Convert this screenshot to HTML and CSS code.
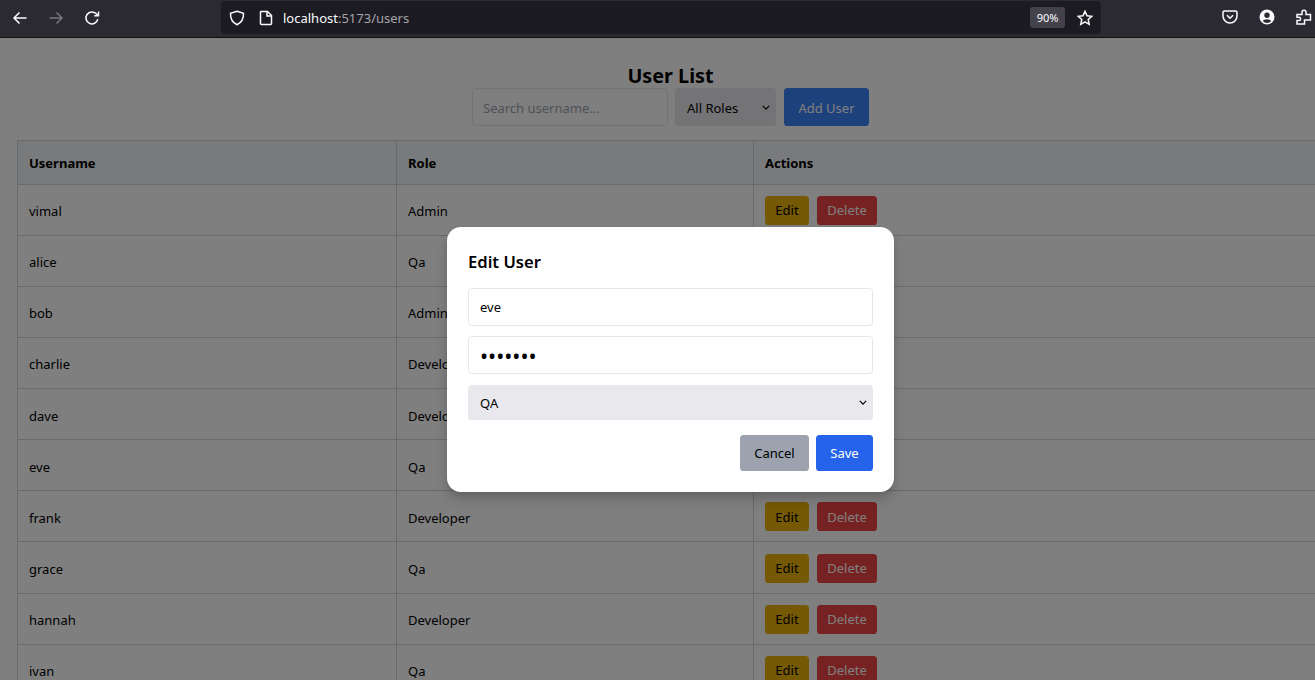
FILE: index.html
```html
<!DOCTYPE html>
<html lang="en">
<head>
    <meta charset="UTF-8">
    <meta name="viewport" content="width=device-width, initial-scale=1.0">
    <title>User List</title>
    <link rel="stylesheet" href="styles.css">
</head>
<body>

    <header class="toolbar">
        <div class="nav-btns">
            <svg class="icon" viewBox="0 0 16 16"><path d="M14.5 8H2M7.5 2.5 2 8l5.5 5.5"/></svg>
            <svg class="icon icon-dim" viewBox="0 0 16 16"><path d="M1.5 8H14M8.500 2.500 14 8l-5.500 5.500"/></svg>
            <svg class="icon" viewBox="0 0 16 16"><path d="M13.800 9.200A6 6 0 1 1 12.300 3.800L14 5.500M14.500 1.500v4.300h-4.300"/></svg>
        </div>
        <div class="urlbar">
            <svg class="icon" viewBox="0 0 16 16"><path d="M8 1.300 14.500 3.200c.2 5.500-1.800 9.300-6.500 11.500C3.300 12.500 1.300 8.700 1.500 3.200z"/></svg>
            <svg class="icon icon-page" viewBox="0 0 16 16"><path d="M3 1.500h6.500L13.500 5.500v8a1 1 0 0 1-1 1h-9a1 1 0 0 1-1-1v-11a1 1 0 0 1 .5-1z"/><path d="M9 1.500v4.500h4.500"/></svg>
            <span class="url"><span class="url-host">localhost</span>:5173/users</span>
            <span class="zoom-badge">90%</span>
            <svg class="icon icon-star" viewBox="0 0 16 16"><path d="m8 1.300 2 4.500 4.800.5-3.600 3.200 1 4.800L8 11.900l-4.200 2.400 1-4.800L1.200 6.300 6 5.800z"/></svg>
        </div>
        <div class="tool-btns">
            <svg class="icon" viewBox="0 0 16 16"><path d="M2.500 2h11A1.500 1.500 0 0 1 15 3.500V7a7 7 0 0 1-14 0V3.500A1.500 1.500 0 0 1 2.500 2z"/><path d="M5 6.300 8 9.200l3-2.900"/></svg>
            <svg class="icon icon-fill" viewBox="0 0 16 16"><path fill-rule="evenodd" d="M8 .5a7.500 7.500 0 1 1 0 15 7.500 7.500 0 0 1 0-15zM8 3.500a2.700 2.700 0 1 0 0 5.400 2.700 2.700 0 0 0 0-5.400zM8 10.300c-2 0-3.500.7-4.200 1.800A5.400 5.400 0 0 0 8 14a5.400 5.400 0 0 0 4.200-1.900c-.7-1.100-2.200-1.800-4.200-1.800z"/></svg>
            <svg class="icon" viewBox="0 0 16 16"><path d="M1 15v-3.500h2a1.600 1.600 0 0 0 0-3.200H1V5.500h5V3.200a2 2 0 0 1 4 0v2.300h4.500V11H8.500v4z"/></svg>
        </div>
    </header>

    <main class="page">
        <h1 class="title">User List</h1>
        <div class="controls">
            <input class="search" type="text" placeholder="Search username...">
            <div class="select-wrap role-filter">
                <select class="select"><option>All Roles</option></select>
                <svg class="chevron" viewBox="0 0 10 6"><path d="M1 1l4 4 4-4"/></svg>
            </div>
            <button class="btn btn-add">Add User</button>
        </div>

        <table class="users">
            <colgroup>
                <col class="col-name">
                <col class="col-role">
                <col>
            </colgroup>
            <thead>
                <tr><th>Username</th><th>Role</th><th>Actions</th></tr>
            </thead>
            <tbody>
                <tr><td>vimal</td><td>Admin</td><td><button class="btn-sm btn-edit">Edit</button><button class="btn-sm btn-delete">Delete</button></td></tr>
                <tr><td>alice</td><td>Qa</td><td><button class="btn-sm btn-edit">Edit</button><button class="btn-sm btn-delete">Delete</button></td></tr>
                <tr><td>bob</td><td>Admin</td><td><button class="btn-sm btn-edit">Edit</button><button class="btn-sm btn-delete">Delete</button></td></tr>
                <tr><td>charlie</td><td>Developer</td><td><button class="btn-sm btn-edit">Edit</button><button class="btn-sm btn-delete">Delete</button></td></tr>
                <tr><td>dave</td><td>Developer</td><td><button class="btn-sm btn-edit">Edit</button><button class="btn-sm btn-delete">Delete</button></td></tr>
                <tr><td>eve</td><td>Qa</td><td><button class="btn-sm btn-edit">Edit</button><button class="btn-sm btn-delete">Delete</button></td></tr>
                <tr><td>frank</td><td>Developer</td><td><button class="btn-sm btn-edit">Edit</button><button class="btn-sm btn-delete">Delete</button></td></tr>
                <tr><td>grace</td><td>Qa</td><td><button class="btn-sm btn-edit">Edit</button><button class="btn-sm btn-delete">Delete</button></td></tr>
                <tr><td>hannah</td><td>Developer</td><td><button class="btn-sm btn-edit">Edit</button><button class="btn-sm btn-delete">Delete</button></td></tr>
                <tr><td>ivan</td><td>Qa</td><td><button class="btn-sm btn-edit">Edit</button><button class="btn-sm btn-delete">Delete</button></td></tr>
            </tbody>
        </table>

        <div class="overlay">
            <div class="modal">
                <h2 class="modal-title">Edit User</h2>
                <input class="field" type="text" value="eve">
                <input class="field field-pass" type="password" value="1234567">
                <div class="select-wrap">
                    <select class="select"><option>QA</option></select>
                    <svg class="chevron" viewBox="0 0 10 6"><path d="M1 1l4 4 4-4"/></svg>
                </div>
                <div class="modal-actions">
                    <button class="btn btn-cancel">Cancel</button>
                    <button class="btn btn-save">Save</button>
                </div>
            </div>
        </div>
    </main>

</body>
</html>
```

FILE: styles.css
```css
* { box-sizing: border-box; }
html, body { margin: 0; height: 680px; overflow: hidden; }
body { font-family: "Noto Sans", Arial, sans-serif; background: #fff; color: #000; width: 1315px; }

/* browser bar */
.toolbar { height: 38px; background: #2b2a33; border-bottom: 1px solid #111; display: flex; align-items: flex-start; color: #fbfbfe; }
.icon { width: 16px; height: 16px; fill: none; stroke: #fbfbfe; stroke-width: 1.5; flex: none; }
.icon-dim { stroke: #77767c; }
.icon-fill { fill: #fbfbfe; stroke: none; }
.nav-btns { display: flex; gap: 20px; padding: 10px 0 0 12px; width: 221px; }
.urlbar { width: 880px; height: 33px; margin-top: 1px; background: #1c1b22; border-radius: 4px; display: flex; align-items: center; padding: 0 8px; }
.icon-page { margin-left: 13px; }
.url { margin-left: 9px; font-size: 13px; color: #a5a4a9; flex: 1; }
.url-host { color: #fbfbfe; }
.zoom-badge { width: 35px; height: 21px; background: #43424b; border-radius: 3px; font-size: 11px; line-height: 21px; text-align: center; }
.icon-star { margin-left: 12px; }
.tool-btns { display: flex; gap: 21px; padding: 9px 0 0 121px; }

/* page */
.page { position: relative; width: 1341px; height: 642px; overflow: hidden; padding: 0 17px; }
.title { margin: 0; padding-top: 26px; font-size: 19.8px; line-height: 24px; font-weight: 700; text-align: center; }
.controls { display: flex; justify-content: center; gap: 7px; height: 38px; margin-bottom: 14px; }
.search { width: 196px; height: 38px; border: 1px solid #e5e7eb; border-radius: 3.6px; padding: 1px 10px 0; font: inherit; font-size: 13px; }
.search::placeholder { color: #9ca3af; opacity: 1; }
.select-wrap { position: relative; height: 35px; }
.role-filter { width: 101px; height: 38px; }
.select { appearance: none; width: 100%; height: 100%; border: 0; border-radius: 3.6px; background: #e9e9ed; color: #000; font: inherit; font-size: 13px; padding: 1px 12px 0; display: block; }
.chevron { position: absolute; right: 6px; top: 50%; width: 8px; height: 5px; margin-top: -2px; fill: none; stroke: #000; stroke-width: 1.5; pointer-events: none; }
.btn { height: 38px; border: 0; border-radius: 3.6px; font: inherit; font-size: 13px; padding: 0; }
.btn-add { width: 85px; margin-left: 1px; padding-top: 1px; background: #3b82f6; color: #fff; }
.btn-cancel { width: 69px; background: #9ca3af; color: #000; }
.btn-save { width: 57px; background: #2563eb; color: #fff; }

/* table */
.users { width: 1307px; table-layout: fixed; border-collapse: collapse; font-size: 13px; }
.col-name { width: 379px; }
.col-role { width: 357px; }
.users th, .users td { border: 1px solid #d1d5db; padding: 0 11px; text-align: left; }
.users th { height: 43.5px; padding-top: 2px; background: #f3f4f6; font-weight: 700; }
.users td { height: 51.15px; padding-top: 3px; }
.btn-sm { height: 29px; margin-bottom: 2px; border: 0; border-radius: 3.6px; font: inherit; font-size: 13px; padding: 0; vertical-align: middle; }
.btn-edit { background: #eab308; color: #000; width: 44px; margin-right: 8px; }
.btn-delete { background: #ef4444; color: #fff; width: 60px; }

/* edit dialog */
.overlay { position: absolute; inset: 0; background: rgba(0, 0, 0, 0.5); display: flex; align-items: center; justify-content: center; }
.modal { width: 447px; height: 265px; background: #fff; border-radius: 14px; padding: 21px; box-shadow: 0 9px 14px rgba(0, 0, 0, 0.12), 0 4px 6px rgba(0, 0, 0, 0.1); }
.modal-title { margin: 0 0 12px; font-size: 16.6px; line-height: 28px; font-weight: 600; }
.field { display: block; width: 100%; height: 38px; margin-bottom: 10.5px; border: 1px solid #e5e7eb; border-radius: 3.6px; padding: 0 11px; font: inherit; font-size: 13px; color: #000; }
.field-pass { font-size: 21.5px; }
.modal-actions { display: flex; justify-content: flex-end; gap: 7px; margin-top: 15px; }
.modal-actions .btn { height: 36px; }
```
